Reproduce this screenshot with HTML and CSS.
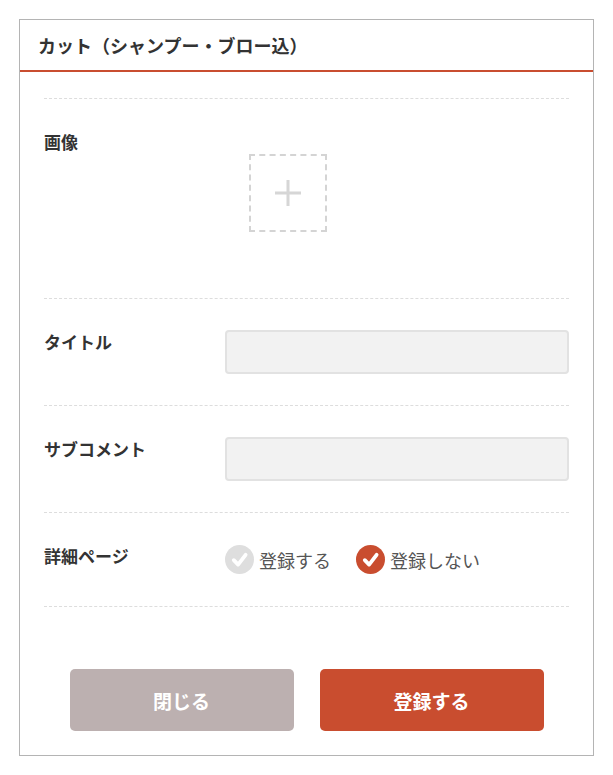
FILE: index.html
```html
<!DOCTYPE html>
<html lang="ja">
<head>
  <meta charset="UTF-8">
  <meta name="viewport" content="width=device-width, initial-scale=1.0">
  <title>メニュー登録</title>
  <link rel="stylesheet" href="styles.css">
</head>
<body>

  <div class="modal">
    <div class="modal-header">
      <h2 class="modal-title">カット（シャンプー・ブロー込）</h2>
    </div>

    <div class="modal-body">
      <div class="form">
        <div class="form-row">
          <div class="form-label">画像</div>
          <div class="form-field image-field">
            <div class="image-upload">
              <svg width="26" height="26" viewBox="0 0 26 26">
                <path d="M13 0v26M0 13h26" stroke="#d6d6d6" stroke-width="3" fill="none"/>
              </svg>
            </div>
          </div>
        </div>

        <div class="form-row">
          <div class="form-label">タイトル</div>
          <div class="form-field">
            <input type="text" class="text-input">
          </div>
        </div>

        <div class="form-row">
          <div class="form-label">サブコメント</div>
          <div class="form-field">
            <input type="text" class="text-input">
          </div>
        </div>

        <div class="form-row">
          <div class="form-label">詳細ページ</div>
          <div class="form-field radios">
            <label class="radio">
              <span class="radio-mark">
                <svg width="29" height="29" viewBox="0 0 29 29">
                  <circle cx="14.5" cy="14.5" r="14.5" fill="#dedede"/>
                  <path d="M8.8 15.2l4.3 4.4L20.6 9.8" stroke="#fff" stroke-width="3.8" fill="none" stroke-linecap="round" stroke-linejoin="round"/>
                </svg>
              </span>
              登録する
            </label>
            <label class="radio">
              <span class="radio-mark">
                <svg width="29" height="29" viewBox="0 0 29 29">
                  <circle cx="14.5" cy="14.5" r="14.5" fill="#c94d2f"/>
                  <path d="M8.8 15.2l4.3 4.4L20.6 9.8" stroke="#fff" stroke-width="3.8" fill="none" stroke-linecap="round" stroke-linejoin="round"/>
                </svg>
              </span>
              登録しない
            </label>
          </div>
        </div>
      </div>

      <div class="modal-actions">
        <button class="btn btn-close">閉じる</button>
        <button class="btn btn-submit">登録する</button>
      </div>
    </div>
  </div>

</body>
</html>
```

FILE: styles.css
```css
body {
  margin: 19px;
  background: #fff;
  font-family: "Noto Sans CJK JP", "Noto Sans", sans-serif;
  color: #333;
}
.modal {
  width: 575px;
  box-sizing: border-box;
  background: #fff;
  border: 1px solid #b4b4b4;
  box-shadow: 0 2px 10px rgba(0, 0, 0, 0.5);
}
.modal-header {
  height: 50px;
  padding: 0 18px;
  display: flex;
  align-items: center;
  border-bottom: 2px solid #c94d30;
}
.modal-title {
  margin: 0;
  font-size: 18px;
  font-weight: bold;
  color: #333;
}
.modal-body {
  padding: 26px 24px 24px;
}
.form {
  border-top: 1px dashed #ddd;
}
.form-row {
  display: flex;
  padding: 31px 0;
  border-bottom: 1px dashed #ddd;
}
.form-label {
  width: 181px;
  flex-shrink: 0;
  font-size: 17px;
  font-weight: bold;
  line-height: 24px;
}
.form-field {
  flex: 1;
}
.image-field {
  padding: 24px 0 35px 24px;
}
.image-upload {
  width: 78px;
  height: 78px;
  box-sizing: border-box;
  border: 2px dashed #d4d4d4;
  display: flex;
  align-items: center;
  justify-content: center;
}
.text-input {
  display: block;
  width: 100%;
  height: 44px;
  box-sizing: border-box;
  background: #f2f2f2;
  border: 2px solid #e2e2e2;
  border-radius: 4px;
}
.radios {
  display: flex;
  gap: 25px;
}
.radio {
  display: flex;
  align-items: center;
  gap: 5px;
  font-size: 18px;
  color: #555;
  height: 31px;
}
.radio-mark {
  display: flex;
}
.modal-actions {
  display: flex;
  justify-content: center;
  gap: 26px;
  margin-top: 62px;
}
.btn {
  width: 224px;
  height: 62px;
  border: none;
  border-radius: 5px;
  font-family: inherit;
  font-size: 19px;
  font-weight: bold;
  color: #fff;
}
.btn-close {
  background: #bcb0b0;
}
.btn-submit {
  background: #c94d2f;
}
```
